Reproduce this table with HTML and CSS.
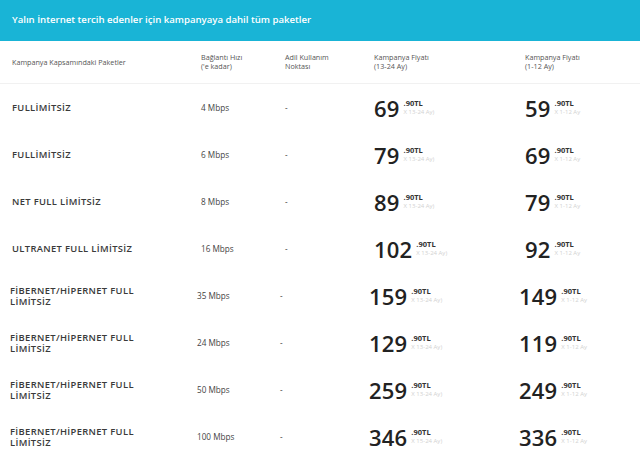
FILE: index.html
```html
<!DOCTYPE html>
<html lang="tr">
<head>
<meta charset="utf-8">
<link rel="stylesheet" href="styles.css">
</head>
<body>
<div class="banner">Yalın İnternet tercih edenler için kampanyaya dahil tüm paketler</div>
<div class="table">
  <div class="row head">
    <div class="c1">Kampanya Kapsamındaki Paketler</div>
    <div class="c2">Bağlantı Hızı<br>('e kadar)</div>
    <div class="c3">Adil Kullanım<br>Noktası</div>
    <div class="c4">Kampanya Fiyatı<br>(13-24 Ay)</div>
    <div class="c5">Kampanya Fiyatı<br>(1-12 Ay)</div>
  </div>

  <div class="row">
    <div class="c1 name">FULLİMİTSİZ</div>
    <div class="c2">4 Mbps</div>
    <div class="c3">-</div>
    <div class="c4 price"><span class="num">69</span><span class="suf"><b>.90TL</b><i>X 13-24 Ay)</i></span></div>
    <div class="c5 price"><span class="num">59</span><span class="suf"><b>.90TL</b><i>X 1-12 Ay</i></span></div>
  </div>
  <div class="row">
    <div class="c1 name">FULLİMİTSİZ</div>
    <div class="c2">6 Mbps</div>
    <div class="c3">-</div>
    <div class="c4 price"><span class="num">79</span><span class="suf"><b>.90TL</b><i>X 13-24 Ay)</i></span></div>
    <div class="c5 price"><span class="num">69</span><span class="suf"><b>.90TL</b><i>X 1-12 Ay</i></span></div>
  </div>
  <div class="row">
    <div class="c1 name">NET FULL LİMİTSİZ</div>
    <div class="c2">8 Mbps</div>
    <div class="c3">-</div>
    <div class="c4 price"><span class="num">89</span><span class="suf"><b>.90TL</b><i>X 13-24 Ay)</i></span></div>
    <div class="c5 price"><span class="num">79</span><span class="suf"><b>.90TL</b><i>X 1-12 Ay</i></span></div>
  </div>
  <div class="row">
    <div class="c1 name">ULTRANET FULL LİMİTSİZ</div>
    <div class="c2">16 Mbps</div>
    <div class="c3">-</div>
    <div class="c4 price"><span class="num">102</span><span class="suf"><b>.90TL</b><i>X 13-24 Ay)</i></span></div>
    <div class="c5 price"><span class="num">92</span><span class="suf"><b>.90TL</b><i>X 1-12 Ay</i></span></div>
  </div>
  <div class="row wide">
    <div class="c1 name">FİBERNET/HİPERNET FULL<br>LİMİTSİZ</div>
    <div class="c2">35 Mbps</div>
    <div class="c3">-</div>
    <div class="c4 price"><span class="num">159</span><span class="suf"><b>.90TL</b><i>X 13-24 Ay)</i></span></div>
    <div class="c5 price"><span class="num">149</span><span class="suf"><b>.90TL</b><i>X 1-12 Ay</i></span></div>
  </div>
  <div class="row wide">
    <div class="c1 name">FİBERNET/HİPERNET FULL<br>LİMİTSİZ</div>
    <div class="c2">24 Mbps</div>
    <div class="c3">-</div>
    <div class="c4 price"><span class="num">129</span><span class="suf"><b>.90TL</b><i>X 13-24 Ay)</i></span></div>
    <div class="c5 price"><span class="num">119</span><span class="suf"><b>.90TL</b><i>X 1-12 Ay</i></span></div>
  </div>
  <div class="row wide">
    <div class="c1 name">FİBERNET/HİPERNET FULL<br>LİMİTSİZ</div>
    <div class="c2">50 Mbps</div>
    <div class="c3">-</div>
    <div class="c4 price"><span class="num">259</span><span class="suf"><b>.90TL</b><i>X 13-24 Ay)</i></span></div>
    <div class="c5 price"><span class="num">249</span><span class="suf"><b>.90TL</b><i>X 1-12 Ay</i></span></div>
  </div>
  <div class="row wide">
    <div class="c1 name">FİBERNET/HİPERNET FULL<br>LİMİTSİZ</div>
    <div class="c2">100 Mbps</div>
    <div class="c3">-</div>
    <div class="c4 price"><span class="num">346</span><span class="suf"><b>.90TL</b><i>X 15-24 Ay)</i></span></div>
    <div class="c5 price"><span class="num">336</span><span class="suf"><b>.90TL</b><i>X 1-12 Ay</i></span></div>
  </div>
</div>
</body>
</html>
```

FILE: styles.css
```css
html, body {
  margin: 0;
  padding: 0;
  background: #ffffff;
  font-family: "Open Sans", "Noto Sans", sans-serif;
  color: #333;
  overflow: hidden;
}

.banner {
  height: 41px;
  box-sizing: border-box;
  background: #19b4d6;
  color: #ffffff;
  font-size: 9.6px;
  font-weight: 600;
  display: flex;
  align-items: center;
  padding-left: 12px;
  padding-bottom: 2px;
}

.table {
  display: flex;
  flex-direction: column;
}

.row {
  display: grid;
  grid-template-columns: 201px 84px 89px 151px 1fr;
  align-items: center;
  height: 47px;
  font-size: 8.2px;
  color: #444;
}

.row.head {
  height: 42px;
  font-size: 7.2px;
  line-height: 9px;
  color: #555;
  border-bottom: 1px solid #f1f1f1;
}

.row.wide {
  grid-template-columns: 197px 83px 89px 150px 1fr;
}

.c1 {
  padding-left: 12px;
}

.row.wide .c1 {
  padding-left: 10px;
}

.name {
  font-weight: 600;
  font-size: 9.4px;
  line-height: 11px;
  color: #3a3a3a;
  letter-spacing: 0.35px;
}

.price {
  display: flex;
  align-items: center;
  gap: 4px;
}

.num {
  font-size: 22px;
  font-weight: 600;
  color: #222;
  line-height: 1;
  letter-spacing: 0.2px;
}

.suf {
  display: flex;
  flex-direction: column;
  margin-top: -1px;
}

.suf b {
  font-size: 7.5px;
  font-weight: 700;
  color: #333;
  line-height: 9px;
}

.suf i {
  font-style: normal;
  font-size: 6px;
  color: #d2d2d2;
  line-height: 8px;
}
```
